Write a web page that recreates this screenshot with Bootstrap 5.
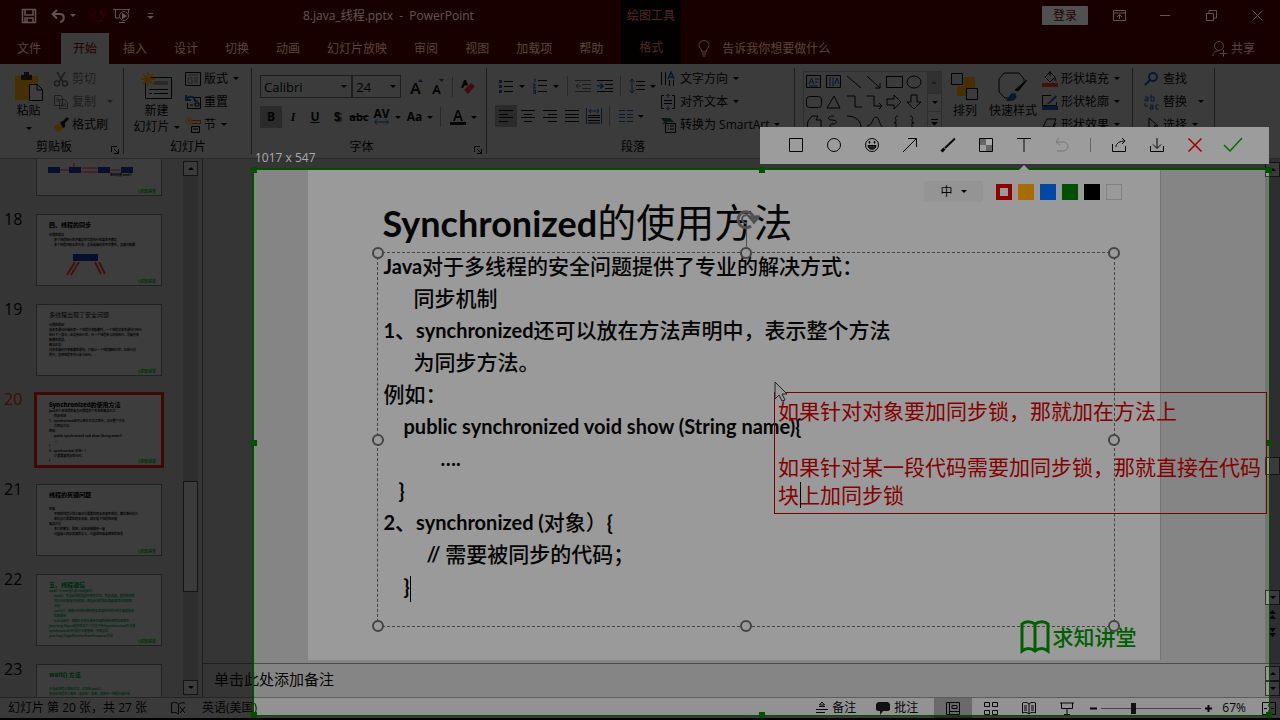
<!DOCTYPE html>
<html lang="zh-CN">
<head>
<meta charset="utf-8">
<meta name="viewport" content="width=device-width, initial-scale=1">
<title>8.java_线程.pptx - PowerPoint</title>
<link href="https://cdn.jsdelivr.net/npm/bootstrap@5.3.0/dist/css/bootstrap.min.css" rel="stylesheet">
<style>
:root{--wine:#3c0000;--chrome:#949494;--work:#858585;--paper:#9a9a9a;--ink:#050505;--line:#555;--shot:#005000}
body{font:12px/16px "Open Sans","Noto Sans CJK SC",sans-serif;color:var(--ink);background:#000;overflow:hidden}
button,select,input,textarea{font:inherit;color:inherit;background:none;border:0;padding:0;margin:0}
svg{display:block;flex:none;fill:none}
svg:not([stroke]){stroke:currentColor}
svg[stroke=none] path:not([fill]){fill:#111}
a{color:inherit;text-decoration:none}
.app{min-height:100vh;height:100vh;padding-bottom:2px}
.caret{width:0;height:0;flex:none;border:3px solid transparent;border-top-color:currentColor;border-bottom:0}
/* title bar and tabs */
.titlebar{height:31px;background:var(--wine);color:#f4cfc8}
.quick{width:303px;padding-left:21px}
.doc-name{width:318px;white-space:pre}
.context-tab{width:60px;background:#080000;color:#c06a50}
.signin{width:46px;height:19px;background:#c9c9c9;color:#5a0a0a;border-radius:1px}
.win-btn{width:46px;height:31px}
.tabs{height:33px;background:var(--wine);color:#e0a494}
.tabs .tab{padding:0 13px;margin-right:1px;height:31px;white-space:nowrap}
.tabs .tab.on{background:var(--chrome);color:#5a0000;padding:0 12px;margin-left:6px;height:31px}
/* ribbon */
.ribbon{height:95px;background:var(--chrome);border-bottom:1px solid #6a6a6a}
.group{position:relative;flex:none;display:flex;flex-direction:column}
.group::after{content:"";position:absolute;right:0;top:4px;bottom:4px;width:1px;background:#4a4a4a}
.group-body{height:72px;padding-top:3px}
.group-name{height:22px;line-height:22px;text-align:center}
.launcher{position:absolute;right:5px;bottom:4px}
.line-btn{height:23px;display:flex;align-items:center;gap:3px;white-space:nowrap}
.line-btn .caret{margin-left:2px}
.big-btn{display:flex;flex-direction:column;align-items:center;white-space:nowrap;padding-top:4px}
.big-btn .pic{height:32px;display:flex;align-items:center}
.tool{width:22px;height:22px;display:flex;align-items:center;justify-content:center}
.tool.on{background:#6c6c6c}
.tool.shade{text-shadow:2px 1px 1px #333}
.tool.struck{font-size:11px}
.wide{display:flex;align-items:center;justify-content:center;gap:5px;height:22px}
.vr-line{width:1px;height:20px;background:#666}
.pick{height:23px;border:1px solid #4c4c4c;font-size:13px;padding:0 3px;appearance:none;border-radius:0;background:url("data:image/svg+xml,%3Csvg xmlns='http://www.w3.org/2000/svg' viewBox='0 0 6 3'%3E%3Cpath d='M0 0h6L3 3z'/%3E%3C/svg%3E") no-repeat right 4px center/6px 3px}
.dim{color:#4a4a4a}
/* thumbnails */
.stage{min-height:0;background:var(--work)}
.rail{width:203px;border-right:1px solid #4a4a4a;overflow:hidden}
.thumbs{margin-top:-35px;width:183px}
.thumb-row{height:90px;display:flex;align-items:flex-start}
.thumb-row>span:first-child{width:36px;padding-left:4px;font-size:16px;line-height:10px}
.thumb{width:126px;height:72px;border:1px solid #555;background:var(--paper);padding:6px 7px 0 12px;position:relative;overflow:hidden;font-size:3px;line-height:5px;font-weight:700}
.thumb b{display:block;font-size:6px;line-height:8px;margin-bottom:3px}
.thumb i{position:absolute;right:5px;bottom:1px;color:#0a7a0a;font-style:normal;font-size:4px}
.thumb p{margin:0;white-space:nowrap}
.thumb .in{padding-left:5px}
.thumb-row.on .thumb{outline:3px solid #a40f0f;outline-offset:-1px}
.green{color:#006a35}
.sbar{width:15px;background:#747474}
.sbtn{width:15px;height:15px;border:1px solid #333;background:#959595;display:flex;align-items:center;justify-content:center;flex:none}
.sbtn.up .caret{transform:rotate(180deg)}
.sthumb{border:1px solid #333;background:#959595;width:15px}
/* slide */
.canvas{padding-top:11px;min-height:0}
.slide{width:853px;max-width:100%;height:490px;background:var(--paper);border-right:1px solid #747474;position:relative;padding:0 45px 0 69px}
.slide h1{font:700 36px/82px Lato,"Noto Sans CJK SC",sans-serif;margin:0;padding:11px 0 0 6px;height:82px;line-height:82px;white-space:nowrap}
.slide h1 span{font-weight:400;font-size:39px}
.textbox{height:375px;border:1px dashed #444;padding:0 6px;font:700 20px/32px Lato,"Noto Sans CJK SC",sans-serif;position:relative}
.textbox .copy{margin-top:-3px}
.textbox p{margin:0;height:32px;white-space:nowrap}
.textbox p span{font-size:21px;font-weight:500}
.ind-a{padding-left:15px}.ind-b{padding-left:20px}.ind-c{padding-left:30px}.ind-d{padding-left:43px}.ind-e{padding-left:57px}
.knob{position:absolute;width:12px;height:12px;border:2px solid #444;border-radius:50%;background:var(--paper);transform:translate(-50%,-50%)}
.brand{position:absolute;right:23px;bottom:6px;color:#005e00;font-size:21px;line-height:32px;font-weight:500;gap:3px}
.notes{height:34px;border-top:1px solid #4c4c4c;padding-left:11px;font-size:15px}
.notes input{width:100%;padding-bottom:3px}
.notes input::placeholder{color:var(--ink);opacity:1}
.ink-caret{display:inline-block;width:1px;height:26px;background:#000;vertical-align:middle}
/* status bar */
.status{height:21px;background:#929292;border-top:1px solid #5c5c5c}
.status .view{width:38px;height:20px;display:flex;align-items:center;justify-content:center}
.status .view.on{background:#6a6a6a}
.zoom-track{width:100px;height:12px;appearance:none;background:linear-gradient(#444,#444) center/100% 1px no-repeat}
.zoom-track::-webkit-slider-thumb{appearance:none;width:5px;height:11px;background:#111}
/* screen capture layer */
.selection{position:absolute;left:252px;right:10px;top:168px;bottom:4px;border:2px solid var(--shot);border-right-width:1px;border-bottom-width:1px;box-shadow:0 0 0 200vmax rgba(0,0,0,.6);pointer-events:none;z-index:5}
.grip{position:absolute;width:6px;height:6px;background:var(--shot);transform:translate(-50%,-50%)}
.sel-size{position:absolute;left:255px;top:150px;color:#aaa;z-index:6}
.shot-bar{position:absolute;right:11px;top:127px;width:509px;height:37px;background:#9c9c9c;z-index:7;padding:0 0 2px 17px}
.shot-bar button{width:38px;height:35px;display:flex;align-items:center;justify-content:center}
.shot-opts{position:absolute;right:158px;top:181px;z-index:7;gap:6px}
.shot-opts .size{width:59px;height:21px;background:#949494;margin-right:7px}
.swatch{width:16px;height:16px}
.tip{position:absolute;right:251px;top:165px;border:5px solid transparent;border-bottom-color:#9c9c9c;border-top:0;z-index:7}
.memo{position:absolute;right:13px;top:392px;width:493px;height:122px;z-index:7}
.memo textarea{display:block;width:100%;height:100%;resize:none;overflow:hidden;border:1px solid #7c0000;padding:3px 3px 0;font:21px/28px "Noto Sans CJK SC",sans-serif;color:#850000;outline:0}
.memo .ink-caret{position:absolute;left:26px;top:90px}
.pointer{position:absolute;left:0;top:-11px}
</style>
</head>
<body>
<div class="app d-flex flex-column">
<header>
 <div class="titlebar d-flex align-items-center">
  <div class="quick d-flex align-items-center">
   <button aria-label="保存"><svg width="16" height="16" stroke-width="1.5"><path d="M1.5 1.5h13v13h-13zM4 2v5h8V2M4 14v-4h8v4M6 11v3"/></svg></button>
   <button class="d-flex align-items-center" style="margin-left:14px" aria-label="撤消"><svg width="15" height="14" stroke-width="2"><path d="M6 1 1.500 5 6 9.500M2 5h7c5 0 5 7 0 8"/></svg><span class="caret ms-1"></span></button>
   <button class="ms-3" style="color:#750000" aria-label="恢复"><svg width="13" height="14" stroke-width="2"><path d="M4 3a5 5 0 1 0 5 0M9 0v5h4"/></svg></button>
   <button class="ms-2" aria-label="放映"><svg width="18" height="16"><path d="M0 1.500h17M2.500 2v8h4M6 14.500h6M15.500 2v3"/><circle cx="11" cy="8" r="4.500"/><path d="m9.500 5.500 4 2.500-4 2.500z" fill="currentColor"/></svg></button>
   <button class="ms-3" aria-label="自定义"><svg width="7" height="8"><path d="M1 1.500h5"/><path d="M0 4h7L3.500 7z" fill="currentColor" stroke="none"/></svg></button>
  </div>
  <div class="doc-name">8.java_线程.pptx  -  PowerPoint</div>
  <div class="context-tab h-100 d-flex align-items-center justify-content-center">绘图工具</div>
  <div class="ms-auto d-flex align-items-center">
   <button class="signin me-2">登录</button>
   <button class="win-btn d-flex align-items-center justify-content-center" aria-label="功能区选项"><svg width="13" height="11"><path d="M.5.5h12v10H.5zM.5 3h12M6.500 9V4.500M4 7l2.500-2.500L9 7"/></svg></button>
   <button class="win-btn d-flex align-items-center justify-content-center" aria-label="最小化"><svg width="10" height="2"><path d="M0 .5h10"/></svg></button>
   <button class="win-btn d-flex align-items-center justify-content-center" aria-label="还原"><svg width="11" height="11"><path d="M.5 3.500h7v7h-7zM3 3V.5h7.500V8H8"/></svg></button>
   <button class="win-btn d-flex align-items-center justify-content-center" aria-label="关闭"><svg width="11" height="11"><path d="m.5.5 10 10m0-10-10 10"/></svg></button>
  </div>
 </div>
 <nav class="tabs d-flex align-items-end">
  <a href="#" class="tab ms-1 d-flex align-items-center">文件</a><a href="#" class="tab on d-flex align-items-center">开始</a><a href="#" class="tab d-flex align-items-center">插入</a><a href="#" class="tab d-flex align-items-center">设计</a><a href="#" class="tab d-flex align-items-center">切换</a><a href="#" class="tab d-flex align-items-center">动画</a><a href="#" class="tab d-flex align-items-center">幻灯片放映</a><a href="#" class="tab d-flex align-items-center">审阅</a><a href="#" class="tab d-flex align-items-center">视图</a><a href="#" class="tab d-flex align-items-center">加载项</a><a href="#" class="tab d-flex align-items-center">帮助</a>
  <a href="#" class="context-tab h-100 d-flex align-items-center justify-content-center ms-1">格式</a>
  <a href="#" class="tab d-flex align-items-center gap-2"><svg class="ms-1 me-1" width="12" height="17"><path d="M4 12c0-3-3-4-3-6.500a5 5 0 0 1 10 0C11 8 8 9 8 12zM4 14h4M4.500 16h3"/></svg>告诉我你想要做什么</a>
  <a href="#" class="tab d-flex align-items-center gap-1 ms-auto" style="margin-right:12px"><svg width="15" height="16"><circle cx="7" cy="5" r="4.500"/><path d="M1 15c0-4 3-5 5-5M11.500 9v6.500M8 12.500h7"/></svg>共享</a>
 </nav>
</header>
<section class="ribbon d-flex">
 <div class="group" style="width:124px">
  <div class="group-body d-flex">
   <button class="big-btn ms-1" style="width:49px"><span class="pic"><svg width="30" height="30"><path d="M1 4h23v24H1z" fill="#b27708" stroke="none"/><path d="M7 3h3V0h5v3h3v5H7z" fill="#222" stroke="none"/><path d="M15.500 12.500h8l5 5v11h-13z" fill="#9a9a9a"/><path d="M23 13v5h5"/></svg></span>粘贴<span class="caret mt-2"></span></button>
   <div>
    <button class="line-btn dim"><svg width="16" height="16" stroke-width="1.500"><path d="m4 1 6 10M12 1 6 11"/><circle cx="4" cy="12.500" r="2.500"/><circle cx="12" cy="12.500" r="2.500"/></svg>剪切</button>
    <button class="line-btn dim"><svg width="16" height="16"><path d="M1.500 1.500h6l2 2v8h-8zM6.500 5.500h5l3 3v6h-8zM3 5h3M3 7h3M8 10h5M8 12h5"/></svg>复制<span class="caret ms-2"></span></button>
    <button class="line-btn"><svg width="16" height="16" stroke="none"><path d="m1 9 6-3 4 5-5 4-3-1z" fill="#b27708"/><path d="m7 5 3-1 4-4 2 2-4 4v4l-2 1z" fill="#111"/></svg>格式刷</button>
   </div>
  </div>
  <div class="group-name pe-3">剪贴板</div><svg class="launcher" width="8" height="8"><path d="M.5 6V.5H6M3 3l4 4M7.500 3v4.500H3"/></svg>
 </div>
 <div class="group" style="width:128px">
  <div class="group-body d-flex">
   <button class="big-btn ms-1" style="width:57px"><span class="pic"><svg width="32" height="30"><path d="M4.500 5.500h26v21h-26z"/><path d="M13 9h14v4H13z" fill="#666" stroke="none"/><path d="M8 17.500h19M8 21.500h3M13 21.500h14"/><path d="M7 0v14M0 7h14M2 2l10 10M12 2 2 12" stroke="#b27708" stroke-width="2"/></svg></span>新建<span class="d-flex align-items-center gap-1">幻灯片<span class="caret"></span></span></button>
   <div>
    <button class="line-btn"><svg width="16" height="14"><path d="M.5.5h15v13H.5z"/><path d="M3 3h10M3 6h4v5H3zM9 6h4M9 8h4M9 10h4" stroke="#555"/></svg>版式<span class="caret"></span></button>
    <button class="line-btn"><svg width="16" height="14"><path d="M8 2.500h7.500v11h-13V8M9 6h4M5 10h3M10 8h4v3h-4z"/><path d="M1 5c2-5 9-4 9 1M1 0v5h5" stroke="#173c75" stroke-width="2"/></svg>重置</button>
    <button class="line-btn"><svg width="16" height="16"><path d="M6 3.500h9.500M15.500 3v4M6 6.500h9.500" stroke="#b22a12"/><path d="M6.500 9.500h8v6h-8zM8 12h5"/><path d="M4 0v8M0 4h8M1 1l6 6M7 1 1 7" stroke="#b27708"/></svg>节<span class="caret"></span></button>
   </div>
  </div>
  <div class="group-name">幻灯片</div>
 </div>
 <div class="group" style="width:235px">
  <div class="group-body px-2" style="padding-top:11px">
   <div class="d-flex align-items-center">
    <select class="pick" style="width:94px" aria-label="字体"><option>Calibri</option></select><select class="pick" style="width:50px" aria-label="字号"><option>24</option></select>
    <button class="tool ms-1" aria-label="增大字号"><svg width="15" height="16" stroke="none"><path d="M1 15 5.500 4h2L12 15H9.500l-1-3h-4l-1 3zm4-5h3L6.500 6z"/><path d="M9 3l2.500-3L14 3z" fill="#173c75"/></svg></button>
    <button class="tool" aria-label="减小字号"><svg width="15" height="16" stroke="none"><path d="M2 15 6 6h1.500L11 15H9l-1-2H5l-1 2zm4-4h2L7 8z"/><path d="M9 0h5l-2.500 3z" fill="#173c75"/></svg></button>
    <span class="vr-line mx-1"></span>
    <button class="tool" aria-label="清除格式"><svg width="16" height="16" stroke="none"><path d="M1 9 4 1h2l2 5-2 1-1-1-2 3z"/><path d="m4 11 7-7 4 3-7 8z" fill="#a02030"/></svg></button>
   </div>
   <div class="d-flex align-items-center mt-2">
    <button class="tool on fw-bold">B</button><button class="tool fst-italic fw-bold" style="font-family:'Liberation Serif'">I</button><button class="tool fw-bold text-decoration-underline">U</button><button class="tool fw-bold shade">S</button><button class="tool struck fw-bold text-decoration-line-through">abc</button>
    <button class="wide" style="width:34px" aria-label="字符间距"><span class="d-flex flex-column align-items-center fw-bold"><span style="line-height:10px">AV</span><svg width="15" height="6" stroke="#173c75"><path d="M1 3h13M3 .5.500 3 3 5.500M12 .5 14.500 3 12 5.500"/></svg></span><span class="caret"></span></button>
    <button class="wide fw-bold" style="width:32px">Aa<span class="caret"></span></button>
    <span class="vr-line mx-1"></span>
    <button class="wide ps-1" style="width:32px" aria-label="字体颜色"><svg width="16" height="16" stroke="none"><path d="M0 13h16v3H0zM3 12 7 1h2l4 11h-2l-1-3H6l-1 3zm3.500-5h3L8 3z"/></svg><span class="caret"></span></button>
   </div>
  </div>
  <div class="group-name pe-3">字体</div><svg class="launcher" width="8" height="8"><path d="M.5 6V.5H6M3 3l4 4M7.500 3v4.500H3"/></svg>
 </div>
 <div class="group" style="width:308px">
  <div class="group-body d-flex">
   <div class="ps-2 pt-2" style="width:173px">
    <div class="d-flex align-items-center">
     <button class="wide" style="width:34px" aria-label="项目符号"><svg width="15" height="15"><path d="M5 2.500h9M5 7.500h9M5 12.500h9"/><path d="M0 1h3v3H0zM0 6h3v3H0zM0 11h3v3H0z" fill="#173c75" stroke="none"/></svg><span class="caret"></span></button>
     <button class="wide" style="width:34px" aria-label="编号"><svg width="15" height="16"><path d="M5 2.500h9M5 7.500h9M5 13.500h9"/><path d="M1 1h1v3M0 6h2v2H0v2h3M0 12h2.500v4H0M0 14h2" stroke="#173c75"/></svg><span class="caret"></span></button>
     <span class="vr-line ms-1 me-1"></span>
     <button class="tool dim" aria-label="减少缩进"><svg width="16" height="14"><path d="M0 1.500h16M7 5.500h9M7 9.500h9M0 12.500h16M1 7h5M3.500 4.500 1 7l2.500 2.500"/></svg></button>
     <button class="tool" aria-label="增加缩进"><svg width="16" height="14"><path d="M0 1.500h16M8 5.500h8M8 9.500h8M0 12.500h16"/><path d="M0 7h6M3.500 4.500 6 7 3.500 9.500" stroke="#173c75" stroke-width="1.500"/></svg></button>
     <span class="vr-line mx-1"></span>
     <button class="wide" style="width:34px" aria-label="行距"><svg width="16" height="16"><path d="M7 3.500h9M7 7.500h9M7 11.500h9"/><path d="M3 1v14M.5 4 3 1l2.500 3M.5 12 3 15l2.500-3" stroke="#173c75"/></svg><span class="caret"></span></button>
    </div>
    <div class="d-flex align-items-center mt-2">
     <button class="tool on" aria-label="左对齐"><svg width="14" height="12"><path d="M0 .5h14M0 4.500h9M0 7.500h14M0 11.500h9"/></svg></button>
     <button class="tool" aria-label="居中"><svg width="14" height="12"><path d="M0 .5h14M3 4.500h8M0 7.500h14M3 11.500h8"/></svg></button>
     <button class="tool" aria-label="右对齐"><svg width="14" height="12"><path d="M0 .5h14M5 4.500h9M0 7.500h14M5 11.500h9"/></svg></button>
     <button class="tool" aria-label="两端对齐"><svg width="14" height="12"><path d="M0 .5h14M0 4.500h14M0 7.500h14M0 11.500h14"/></svg></button>
     <button class="tool" aria-label="分散对齐"><svg width="16" height="16"><path d="M2 7.500h12M2 9.500h12M2 12.500h12M2 15h12"/><path d="M.5 0v16M15.500 0v16M3 3h10M5 1 3 3l2 2M11 1l2 2-2 2" stroke="#173c75"/></svg></button>
     <span class="vr-line mx-1"></span>
     <button class="wide" style="width:34px" aria-label="分栏"><svg width="14" height="12" stroke="#173c75"><path d="M0 .5h6M0 4.500h6M0 7.500h6M0 11.500h6M8 .5h6M8 4.500h6M8 7.500h6M8 11.500h6"/></svg><span class="caret"></span></button>
    </div>
   </div>
   <div>
    <button class="line-btn"><svg width="17" height="16"><path d="M1.500 1v13M5.500 1v13M9.500 9v6M13.500 9v6"/><path d="m8 8 3-7 3 7M9 6h4" stroke="#173c75" stroke-width="1.500"/></svg>文字方向<span class="caret"></span></button>
    <button class="line-btn"><svg width="17" height="16"><path d="M4 1.500H1.500v13H4M12 1.500h2.500v13H12M4 6.500h8M4 9.500h8"/><path d="M8 0v4M6 2l2-2 2 2M8 12v4M6 14l2 2 2-2" stroke="#173c75"/></svg>对齐文本<span class="caret"></span></button>
    <button class="line-btn"><svg width="17" height="16"><path d="M1 1h9l4 4h-7l-5 3 2-3z" fill="#174030" stroke="none"/><path d="M5.500 6.500h10v9h-10zM8 9h1M10 9h4M8 12h1M10 12h4"/></svg>转换为 SmartArt<span class="caret"></span></button>
   </div>
  </div>
  <div class="group-name pe-3">段落</div>
 </div>
 <div class="group" style="width:338px">
  <div class="group-body d-flex">
   <div class="d-flex border border-secondary ms-2 mt-1" style="height:70px">
    <svg width="123" height="68" viewBox="0 0 123 68"><path d="M2.500 3.500h14v12h-14zM22.500 3.500h14v12h-14zM43 4l14 12M63 4l13 12M76 11v5h-5M82.500 4.500h16v11h-16z"/><ellipse cx="110" cy="10" rx="7" ry="6"/><path d="m5 12 2.500-6L10 12M6 10h3M11 7h4M11 10h4M5 14h9M26 5v9M29 5v9M31 12l2-6 2 6" stroke="#173c75"/><rect x="2.500" y="24.500" width="15" height="11" rx="3"/><path d="m30 24-7 12h13zM43 24h8v11h7M63 24h7v10h8M75 31l3 3-3 3M83 27h7v-4l7 7-7 7v-4h-7zM107 23h6v7h4l-7 7-7-7h4zM4 49l4-5h6l-2 4h5v8H3zM30 44c-7 0-7 4-2 4s6 4 1 4-4 4 2 4M43 44c8 0 14 4 14 12M63 54c6 0 5-9 9-9s3 11 9 11M94 44c-4 0-2 3-2 5s-1 2-2 2c3 0 2 1 2 3s0 3 2 3M106 44c4 0 2 3 2 5s1 2 2 2c-3 0-2 1-2 3s0 3-2 3"/></svg>
    <div class="border-start border-secondary" style="width:14px">
     <div class="d-flex align-items-center justify-content-center dim" style="height:21px;transform:rotate(180deg);background:#7c7c7c"><span class="caret"></span></div><div class="d-flex align-items-center justify-content-center border-top border-bottom border-secondary" style="height:19px"><span class="caret"></span></div><div class="d-flex align-items-center justify-content-center" style="height:20px"><svg width="7" height="7"><path d="M0 .5h7"/><path d="M0 3h7L3.500 6.500z" fill="currentColor" stroke="none"/></svg></div>
    </div>
   </div>
   <button class="big-btn" style="width:46px"><span class="pic"><svg width="28" height="28"><path d="M13 4h11v11H13zM6 13h10v10H6z" fill="#b27708" stroke="none"/><path d="M.5.5h11v11H.5zM15.500 15.500h11v11h-11z" fill="#949494"/></svg></span>排列<span class="caret mt-2"></span></button>
   <button class="big-btn" style="width:50px"><span class="pic"><svg width="30" height="30"><path d="M14 26H7L1 20V7l5-6h15l5 6v3"/><path d="m29 8-9 11-3-1z" fill="#111"/><path d="m8 29 4-6c3-4 8-1 6 3-2 3-5 3-10 3z" fill="#173c75" stroke="none"/></svg></span>快速样式<span class="caret mt-2"></span></button>
   <div class="ps-1">
    <button class="line-btn"><svg width="16" height="16"><path d="m3 6 5-5 5 5-5 5zM8 0v5"/><path d="m13 5 2 6-3-2z" fill="#173c75" stroke="none"/><path d="M0 12h16v4H0z" fill="#a82a20" stroke="none"/></svg>形状填充<span class="caret"></span></button>
    <button class="line-btn"><svg width="16" height="16"><path d="M9 1.500H.5v10h14V8"/><path d="m5 10 9-9 1 2-8 7z" fill="#173c75" stroke="none"/><path d="M0 12h16v4H0z" fill="#173c75" stroke="none"/></svg>形状轮廓<span class="caret"></span></button>
    <button class="line-btn"><svg width="16" height="16"><path d="m1 10 4-8h9l-3 8zM1 10v4h9l4-8"/></svg>形状效果<span class="caret"></span></button>
   </div>
  </div>
 </div>
 <div class="group" style="width:82px">
  <div class="group-body" style="padding-left:11px">
   <button class="line-btn"><svg width="16" height="14" stroke="#173c75" stroke-width="2"><circle cx="9" cy="5" r="4"/><path d="m6 8-5 5"/></svg>查找</button>
   <button class="line-btn"><svg width="16" height="16" stroke="#173c75"><path d="M1 3h3v4H1V5h3M7 0v7h3V3H7M6 11h3v4H6v-2h3M15 11h-3v4h3M1 9v3h3"/></svg>替换<span class="caret ms-2"></span></button>
   <button class="line-btn"><svg width="16" height="16"><path d="M5 1v12l3-3 2 4 2-1-2-4h4z"/></svg>选择<span class="caret"></span></button>
  </div>
 </div>
</section>
<main class="stage flex-fill d-flex">
 <aside class="rail d-flex flex-shrink-0">
  <div class="thumbs">
   <div class="thumb-row"><span></span><div class="thumb"><svg style="position:absolute;left:10px;top:38px" width="88" height="22" stroke="#a82a20"><path d="M13 7h9M35 5h16M35 9h16M63 7h10M27 0v4"/><path d="M1 4h12v6H1zM22 4h12v6H22zM51 4h12v6H51zM74 4h12v6H74z" fill="#14266f" stroke="none"/></svg><span style="position:absolute;left:73px;top:48px">等待阻塞 wait()</span><i>▯求知讲堂</i></div></div>
   <div class="thumb-row"><span>18</span><div class="thumb"><b>四、线程的同步</b><p class="mt-1">问题的提出</p><p class="in">多个线程执行的不确定性引起执行结果的不稳定</p><p class="in">多个线程对账本的共享，会造成操作的不完整性，会破坏数据</p><svg style="position:absolute;left:28px;top:38px" width="46" height="24" stroke="#a82a20" stroke-width="2"><path d="M10 9 2 22M14 9 6 22M30 9l6 12M34 9l6 12"/><path d="M8 1h25v7H8z" fill="#14266f" stroke="none"/></svg><i>▯求知讲堂</i></div></div>
   <div class="thumb-row"><span>19</span><div class="thumb"><b class="fw-normal">多线程出现了安全问题</b><p class="mt-1">问题的原因：</p><p>当多条语句在操作同一个线程共享数据时，一个线程对多条语句只执行</p><p>执行了一部分，还没有执行完，另一个线程参与进来执行。导致共享</p><p>数据的错误。</p><p>解决办法：</p><p>对多条操作共享数据的语句，只能让一个线程都执行完，在执行过</p><p>程中，其他线程不可以参与执行。</p><i>▯求知讲堂</i></div></div>
   <div class="thumb-row on"><span style="color:#a0200f">20</span><div class="thumb"><b class="mb-0">Synchronized的使用方法</b><p>Java对于多线程的安全问题提供了专业的解决方式：</p><p class="in">同步机制</p><p>1、synchronized还可以放在方法声明中，表示整个方法</p><p class="in">为同步方法。</p><p>例如：</p><p class="in">public synchronized void show (String name){</p><p class="in">….</p><p>}</p><p>2、synchronized (对象）{</p><p class="in">// 需要被同步的代码；</p><p>}</p><i>▯求知讲堂</i></div></div>
   <div class="thumb-row"><span>21</span><div class="thumb"><b>线程的死锁问题</b><p class="mt-2">死锁</p><p class="in">不同的线程分别占用对方需要的同步资源不放弃，都在等待对方</p><p class="in">放弃自己需要的同步资源，就形成了线程的死锁</p><p>解决方法</p><p class="in">专门的算法、原则，比如加锁顺序一致</p><p class="in">尽量减少同步资源的定义，尽量避免锁未释放的场景</p><i>▯求知讲堂</i></div></div>
   <div class="thumb-row"><span>22</span><div class="thumb green"><b class="mb-0">五、线程通信</b><p>wait() 与 notify() 和 notifyAll()</p><p class="in">wait()：令当前线程挂起并放弃CPU、同步资源，使别的线程</p><p class="in">可访问并修改共享资源，而当前线程排队等候再次对资源的</p><p class="in">访问</p><p class="in">notify()：唤醒正在排队等待同步资源的线程中优先级最高者</p><p class="in">结束等待</p><p class="in">notifyAll()：唤醒正在排队等待资源的所有线程结束等待</p><p>Java.lang.Object提供的这三个方法只有在synchronized方法或</p><p>synchronized代码块中才能使用，否则会报</p><p>java.lang.IllegalMonitorStateException异常</p><i>▯求知讲堂</i></div></div>
   <div class="thumb-row"><span>23</span><div class="thumb green"><b class="mb-2">wait() 方法</b><p>在当前线程中调用方法：对象名.wait()</p><p>使当前线程进入等待（某对象）状态，直到另一线程对该对象</p></div></div>
  </div>
  <div class="sbar d-flex flex-column justify-content-between" style="margin-top:2px;margin-bottom:2px">
   <div class="sbtn up"><span class="caret"></span></div><div style="flex:306 0 0"></div><div class="sthumb" style="flex:110 0 0"></div><div style="flex:88 0 0"></div><div class="sbtn"><span class="caret"></span></div>
  </div>
 </aside>
 <div class="flex-fill d-flex flex-column" style="min-width:0">
  <div class="d-flex flex-fill" style="min-height:0">
   <div class="canvas flex-fill">
    <article class="slide mx-auto">
     <h1>Synchronized<span>的使用方法</span></h1>
     <div class="textbox">
      <div class="copy">
      <p>Java<span>对于多线程的安全问题提供了专业的解决方式：</span></p>
      <p class="ind-c"><span>同步机制</span></p>
      <p>1<span>、</span>synchronized<span>还可以放在方法声明中，表示整个方法</span></p>
      <p class="ind-c"><span>为同步方法。</span></p>
      <p><span>例如：</span></p>
      <p class="ind-b">public synchronized void show (String name){</p>
      <p class="ind-e">….</p>
      <p class="ind-a">}</p>
      <p>2<span>、</span>synchronized (<span>对象）</span>{</p>
      <p class="ind-d">// <span>需要被同步的代码；</span></p>
      <p class="ind-b">}<i class="ink-caret"></i></p>
      </div>
      <div class="knob" style="left:0;top:0"></div><div class="knob" style="left:50%;top:0"></div><div class="knob" style="left:100%;top:0"></div><div class="knob" style="left:0;top:50%"></div><div class="knob" style="left:100%;top:50%"></div><div class="knob" style="left:0;top:100%"></div><div class="knob" style="left:50%;top:100%"></div><div class="knob" style="left:100%;top:100%;z-index:2"></div>
      <svg style="position:absolute;left:50%;top:-44px;margin-left:-10px;color:#505050" width="24" height="38" stroke-width="3"><path d="M15 17a8 8 0 1 1 3-7M14 8h8l-4 5z"/><path d="M11 14a4 4 0 1 1 3-4" stroke-width="2"/><path d="M10.500 20v18" stroke-width="1"/></svg>
     </div>
     <div class="brand d-flex align-items-center"><svg width="30" height="34" stroke-width="3"><path d="M15 4C11 1 5 1 2 4v27c4-3 9-3 13 0 4-3 9-3 13 0V4c-3-3-9-3-13 0v27"/></svg>求知讲堂</div>
    </article>
   </div>
   <div class="sbar d-flex flex-column" style="padding-top:3px">
    <div class="sbtn up"><span class="caret"></span></div><div style="flex:288 0 0"></div><div class="sthumb" style="flex:17 0 0"></div><div style="flex:118 0 0"></div><div class="sbtn"><span class="caret"></span></div>
    <svg class="mx-auto mt-1 mb-4" width="9" height="30" stroke="none"><path d="M1 5 4.500 1 8 5zM1 10l3.500-4L8 10zM1 19h7l-3.500 4zM1 24h7l-3.500 4z"/></svg>
   </div>
  </div>
  <div class="notes d-flex align-items-center"><input placeholder="单击此处添加备注" aria-label="备注"><div><div class="sbtn up"><span class="caret"></span></div><div class="sbtn"><span class="caret"></span></div></div></div>
 </div>
</main>
<footer class="status d-flex align-items-center flex-shrink-0">
 <span class="ms-2">幻灯片 第 20 张，共 27 张</span>
 <svg class="ms-4" width="15" height="13"><path d="M7.500 12C5 10 3 10 .5 11V1c3-1 5-1 7 1zM8 2c1-1 3-1.500 6-1M9 5l5 6M14 5l-5 6"/></svg>
 <span class="ms-3">英语(美国)</span>
 <button class="ms-auto me-3 d-flex align-items-center gap-1"><svg width="12" height="12"><path d="M0 7.500h12M0 10.500h9M3 4.500h6M6 0 3.500 3h5z"/></svg>备注</button>
 <button class="ms-1 me-3 d-flex align-items-center gap-1"><svg width="14" height="13"><path d="M2 0h10l2 2v6l-2 1H7l-3 4V9H2L0 8V2z" fill="#111" stroke="none"/></svg>批注</button>
 <button class="view on" aria-label="普通视图"><svg width="14" height="13"><path d="M.5.5h13v12H.5zM3.500 1v11M4 9.500h9M6 3.500h5v3H6z"/></svg></button>
 <button class="view" aria-label="幻灯片浏览"><svg width="14" height="13"><path d="M.5.5h5v4h-5zM8.500.5h5v4h-5zM.5 8.500h5v4h-5zM8.500 8.500h5v4h-5z"/></svg></button>
 <button class="view" aria-label="阅读视图"><svg width="14" height="13"><path d="M7 12C5 10 3 10 .5 11V1C3 0 5 0 7 2c2-2 4-2 6.500-1v10C11 10 9 10 7 12V2M2 4h3M2 6h3M2 8h3M9 4h3M9 6h3M9 8h3"/></svg></button>
 <button class="view" aria-label="幻灯片放映"><svg width="14" height="13"><path d="M0 1h14M1.500 1v5.500h11V1M7 7v5M4 12.500h6"/></svg></button>
 <button class="ms-1" aria-label="缩小"><svg width="7" height="7" stroke-width="2"><path d="M0 3.500h7"/></svg></button>
 <input class="zoom-track mx-1" type="range" min="10" max="400" value="130" aria-label="显示比例">
 <button aria-label="放大"><svg width="7" height="7" stroke-width="2"><path d="M0 3.500h7M3.500 0v7"/></svg></button>
 <span style="margin:0 16px 0 10px">67%</span>
 <button class="me-1" aria-label="适应窗口"><svg width="14" height="13"><path d="M.5.5h13v12H.5zM7 2v3M7 8v3M2 6.500h3M9 6.500h3"/></svg></button>
</footer>
</div>
<span class="sel-size">1017 x 547</span>
<div class="selection"><i class="grip" style="left:0;top:0"></i><i class="grip" style="left:50%;top:0"></i><i class="grip" style="left:100%;top:0"></i><i class="grip" style="left:0;top:50%"></i><i class="grip" style="left:100%;top:50%"></i><i class="grip" style="left:0;top:100%"></i><i class="grip" style="left:50%;top:100%"></i><i class="grip" style="left:100%;top:100%"></i></div>
<div class="shot-bar d-flex align-items-center">
 <button aria-label="矩形"><svg width="16" height="16"><path d="M1.500 1.500h13v13h-13z"/></svg></button>
 <button aria-label="椭圆"><svg width="16" height="16"><circle cx="8" cy="8" r="6.500"/></svg></button>
 <button aria-label="表情"><svg width="16" height="16"><circle cx="8" cy="8" r="6.500"/><path d="M4 8.500h8c0 5-8 5-8 0z" fill="#222"/><path d="M5.500 4v2.500M10.500 4v2.500" stroke-width="1.500"/></svg></button>
 <button aria-label="箭头"><svg width="16" height="16"><path d="M1 15 14.500 1.500M6 1.500h8.500V10"/></svg></button>
 <button aria-label="画笔"><svg width="16" height="16" stroke-width="2"><path d="M5 11 15 1.500"/><path d="m1.500 14.500 3-3" stroke-width="3"/></svg></button>
 <button aria-label="马赛克"><svg width="16" height="16"><path d="M2 2h6v6H2zM8 8h6v6H8z" fill="#666" stroke="none"/><path d="M8 2h6v6H8z" fill="#aaa" stroke="none"/><path d="M1.500 1.500h13v13h-13z"/></svg></button>
 <button aria-label="文字"><svg width="16" height="16"><path d="M1 1.500h14M8 1.500V15"/></svg></button>
 <button aria-label="撤销"><svg width="16" height="16" style="color:#777"><path d="M5 1 2 5l4 3M2 5h6c8 0 8 9 0 9H3"/></svg></button>
 <span class="vr-line" style="height:14px;margin:0 9px"></span>
 <button aria-label="分享"><svg width="16" height="16"><path d="M1.500 7v7.500h13V9M5 10c0-4 4-6 9-6M11 1l3 3-3 3"/></svg></button>
 <button aria-label="保存截图"><svg width="16" height="16"><path d="M1.500 9v5.500h13V9M8 1v10M4 7.500l4 4 4-4"/></svg></button>
 <button aria-label="取消"><svg width="16" height="16" stroke="#a00000" stroke-width="1.500"><path d="m1.500 1.500 13 13m0-13-13 13"/></svg></button>
 <button aria-label="完成"><svg width="20" height="16" stroke="#006d0c" stroke-width="1.500"><path d="m1 8 6 6L19 1"/></svg></button>
</div>
<i class="tip"></i>
<div class="shot-opts d-flex align-items-center">
 <button class="size d-flex align-items-center justify-content-center gap-1">中<span class="caret ms-1"></span></button>
 <button class="swatch" style="border:4px solid #8e0000" aria-label="红"></button><button class="swatch" style="background:#a86c00" aria-label="黄"></button><button class="swatch" style="background:#0048a4" aria-label="蓝"></button><button class="swatch" style="background:#005000" aria-label="绿"></button><button class="swatch" style="background:#000" aria-label="黑"></button><button class="swatch" style="border:1px solid #808080" aria-label="白"></button>
</div>
<div class="memo"><textarea aria-label="批注文字" spellcheck="false">如果针对对象要加同步锁，那就加在方法上

如果针对某一段代码需要加同步锁，那就直接在代码块上加同步锁</textarea><i class="ink-caret"></i>
<svg class="pointer" width="14" height="21"><path d="M1 1v17l4-4 3 6 3-1-3-6h5z" fill="#999" stroke="#222"/></svg></div>
<script src="https://cdn.jsdelivr.net/npm/bootstrap@5.3.0/dist/js/bootstrap.bundle.min.js"></script>
</body>
</html>
